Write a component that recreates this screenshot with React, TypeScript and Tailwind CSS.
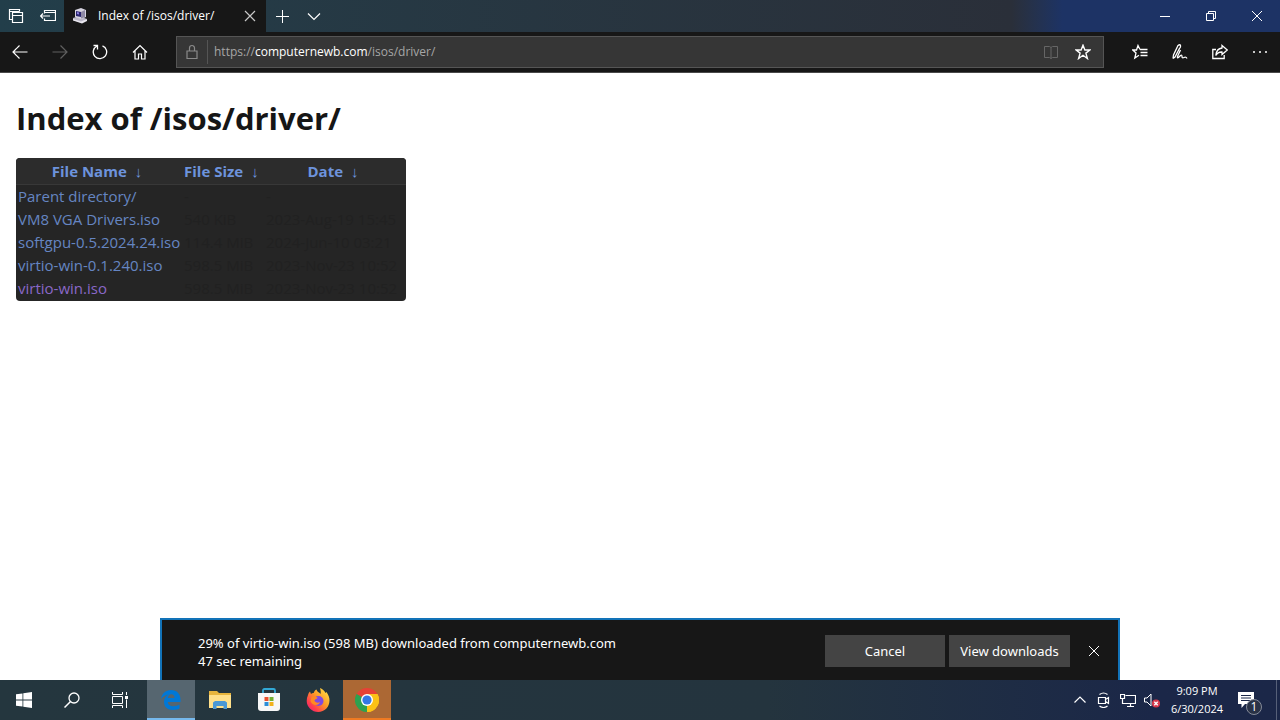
import { useState, type ReactNode } from "react";

type IconProps = { children: ReactNode; className?: string };

function Icon({ children, className = "size-4" }: IconProps) {
  return (
    <svg viewBox="0 0 16 16" fill="none" stroke="currentColor" strokeWidth="1" className={className} aria-hidden="true">
      {children}
    </svg>
  );
}

function IconButton({ label, className, children, disabled }: { label: string; className: string; children: ReactNode; disabled?: boolean }) {
  return (
    <button type="button" aria-label={label} disabled={disabled} className={`flex shrink-0 items-center justify-center ${className}`}>
      {children}
    </button>
  );
}

const files = [
  { name: "Parent directory/", size: "-", date: "-", visited: false },
  { name: "VM8 VGA Drivers.iso", size: "540 KiB", date: "2023-Aug-19 15:45", visited: false },
  { name: "softgpu-0.5.2024.24.iso", size: "114.4 MiB", date: "2024-Jun-10 03:21", visited: false },
  { name: "virtio-win-0.1.240.iso", size: "598.5 MiB", date: "2023-Nov-23 10:52", visited: false },
  { name: "virtio-win.iso", size: "598.5 MiB", date: "2023-Nov-23 10:52", visited: true },
];

const starPath = "M8 1.200 9.900 6h5l-4 3.100 1.500 5.400L8 11.300l-4.400 3.200 1.500-5.400-4-3.100h5z";

function TabBar() {
  return (
    <header className="flex h-8 bg-linear-to-r from-[#223e4a] via-[#2a2f39] via-79% to-[#1d3365] to-83% text-white">
      <IconButton label="Tabs you've set aside" className="w-8">
        <Icon>
          <path d="M4 11.500H1.500v-10h10v2M1.500 3.500h10M4.500 4.500h10v10h-10zM4.500 7.500h10" strokeWidth="1.200" />
        </Icon>
      </IconButton>
      <IconButton label="Set these tabs aside" className="w-8">
        <Icon>
          <path d="M4.500 5.500v-3h11v10h-11v-2M4.500 4.500h11M.5 8h9.500M3 5.500.5 8 3 10.500" strokeWidth="1.200" />
        </Icon>
      </IconButton>
      <div className="flex w-[202px] items-center bg-[#171717] pr-1 pl-2">
        <svg viewBox="0 0 16 16" className="size-4 shrink-0" aria-hidden="true">
          <path d="m1 10 6-2 8 3-5 4-9-3z" fill="#b9b6c6" />
          <path d="m1 11 8 2.500 6-2.500v2l-5 2.500-9-3z" fill="#e9e7ef" />
          <path d="m3 2 6-2 5 2v7l-5 2-6-2z" fill="#d6d3df" />
          <path d="m4 3 5 1v5L4 8z" fill="#2a2570" />
          <path d="m9 4 4-2v7l-4 1.500z" fill="#8e89a5" />
          <path d="m5 4 2 .5v2L5 6z" fill="#8c80e0" />
        </svg>
        <span className="ml-2.5 flex-1 truncate text-xs font-medium">Index of /isos/driver/</span>
        <IconButton label="Close tab" className="size-6 text-[#c8c8c8]">
          <Icon>
            <path d="m3 3 10 10M13 3 3 13" strokeWidth="1.200" />
          </Icon>
        </IconButton>
      </div>
      <IconButton label="New tab" className="w-8">
        <Icon>
          <path d="M8.500 2v13M2 8.500h13" />
        </Icon>
      </IconButton>
      <IconButton label="Show tab previews" className="w-8">
        <Icon>
          <path d="m2 5.500 6 6 6-6" strokeWidth="1.200" />
        </Icon>
      </IconButton>
      <div className="flex-1" />
      <IconButton label="Minimize" className="w-[46px]">
        <Icon>
          <path d="M3 8.500h10" />
        </Icon>
      </IconButton>
      <IconButton label="Restore" className="w-[46px]">
        <Icon>
          <path d="M3.500 5.500h7v7h-7zM5.500 5V3.500h7v7H11" />
        </Icon>
      </IconButton>
      <IconButton label="Close window" className="w-[46px]">
        <Icon>
          <path d="m3 3 10 10M13 3 3 13" />
        </Icon>
      </IconButton>
    </header>
  );
}

function Toolbar() {
  return (
    <nav aria-label="Browser" className="flex h-[41px] items-center border-b border-[#4a4a4a] bg-[#171717] text-white">
      <IconButton label="Back" className="h-8 w-10">
        <Icon>
          <path d="M1 8h14.500M7.500 1.500 1 8l6.500 6.500" strokeWidth="1.200" />
        </Icon>
      </IconButton>
      <IconButton label="Forward" className="h-8 w-10 text-[#606060]" disabled>
        <Icon>
          <path d="M.5 8H15M8.500 1.500 15 8l-6.500 6.500" strokeWidth="1.200" />
        </Icon>
      </IconButton>
      <IconButton label="Refresh" className="h-8 w-10">
        <Icon>
          <path d="M5 2a6.700 6.700 0 1 0 5.500-.2M1.500 1.500h4v4" strokeWidth="1.300" />
        </Icon>
      </IconButton>
      <IconButton label="Home" className="h-8 w-10">
        <Icon>
          <path d="M1 8.500 8 1.500l7 7M3 7v8h3.500v-5h3v5H13V7" strokeWidth="1.200" />
        </Icon>
      </IconButton>
      <div className="ml-4 flex h-8 min-w-0 flex-1 items-center border border-[#555] bg-[#363636]">
        <IconButton label="Website identity" className="h-6 w-[31px] border-r border-[#555] text-[#8a8a8a]">
          <Icon>
            <path d="M3 7h10v7.500H3zM5.500 7V4a2.500 2.500 0 0 1 5 0v3" strokeWidth="1.200" />
          </Icon>
        </IconButton>
        <div className="relative h-full min-w-0 flex-1 text-xs leading-[30px]">
          <input
            aria-label="Address"
            defaultValue="https://computernewb.com/isos/driver/"
            className="peer h-full w-full bg-transparent px-1.5 text-transparent outline-none focus:text-white"
          />
          <span aria-hidden="true" className="pointer-events-none absolute inset-0 truncate px-1.5 text-[#a6a6a6] peer-focus:hidden">
            https://<span className="text-white">computernewb.com</span>/isos/driver/
          </span>
        </div>
        <IconButton label="Reading view" className="h-full w-8 text-[#666]" disabled>
          <Icon>
            <path d="M1.500 2.500h5L8 3.500l1.500-1h5v11h-5L8 14.500l-1.500-1h-5zM8 3.500v11" />
          </Icon>
        </IconButton>
        <IconButton label="Add to favorites" className="mr-1 h-full w-8">
          <Icon>
            <path d={starPath} strokeWidth="1.400" />
          </Icon>
        </IconButton>
      </div>
      <div className="ml-4 flex">
        <IconButton label="Favorites hub" className="h-8 w-10">
          <Icon>
            <path d="M8 5.500 6 1.500 4.500 6H.8l3.200 3-1.200 5L7 11.200M8 5.500h7.500M8.500 8.500h7M8.500 11.500h7" strokeWidth="1.300" />
          </Icon>
        </IconButton>
        <IconButton label="Add notes" className="h-8 w-10">
          <Icon>
            <path d="M1 14.500 1.500 11 6 1.500q2-1.500 2.500 0t-1 3L3 13l-2 1.500M8.500 6 5.500 12.500q-.5 2 1 1l2-2q1.500-1 1.500 1t2 1 3 1" strokeWidth="1.300" />
          </Icon>
        </IconButton>
        <IconButton label="Share" className="h-8 w-10">
          <Icon>
            <path d="M4 5.500H.8v9h11.400V11M10 1.500l5.300 4.500L10 10.500V8C7 7.800 5.200 9 3.800 11.500 4.200 7 6.500 4.400 10 4z" strokeWidth="1.300" />
          </Icon>
        </IconButton>
        <IconButton label="Settings and more" className="h-8 w-10">
          <Icon>
            <g fill="currentColor" stroke="none">
              <circle cx="2" cy="8" r="1" />
              <circle cx="8" cy="8" r="1" />
              <circle cx="14" cy="8" r="1" />
            </g>
          </Icon>
        </IconButton>
      </div>
    </nav>
  );
}

function HeadCell({ label }: { label: string }) {
  return (
    <th className="h-[26px] border-b border-[#383838] px-0.5 pt-0.5 pb-0 text-center font-bold">
      <a href="#sort">{label}</a>
      <a href="#sort-descending" aria-label={`Sort by ${label}, descending`} className="mr-1 ml-2 font-normal">
        ↓
      </a>
    </th>
  );
}

function Listing() {
  return (
    <main className="flex-1 px-4 pt-5">
      <h1 className="text-[31px] leading-[50px] font-bold text-[#161616]">Index of /isos/driver/</h1>
      <div className="mt-[15px] w-fit overflow-hidden rounded bg-[#252525] pb-px">
        <table className="w-[390px] table-fixed border-collapse text-[15px] leading-[23px] whitespace-nowrap text-[#6d93dc]">
          <colgroup>
            <col className="w-[166px]" />
            <col className="w-[82px]" />
            <col />
          </colgroup>
          <thead className="bg-[#2c2c2c]">
            <tr>
              <HeadCell label="File Name" />
              <HeadCell label="File Size" />
              <HeadCell label="Date" />
            </tr>
          </thead>
          <tbody>
            {files.map((file) => (
              <tr key={file.name} className="text-[#212121]">
                <td className="px-0.5 py-0">
                  <a href="#file" className={file.visited ? "text-[#8a68c8]" : "text-[#6585c2]"}>
                    {file.name}
                  </a>
                </td>
                <td className="px-0.5 py-0">{file.size}</td>
                <td className="px-0.5 py-0">{file.date}</td>
              </tr>
            ))}
          </tbody>
        </table>
      </div>
    </main>
  );
}

function DownloadBar({ onClose }: { onClose: () => void }) {
  return (
    <section
      aria-label="Download"
      className="mx-40 flex h-[62px] items-center border-2 border-b-0 border-[#1273b8] bg-[#171717] pr-1 pl-9 font-['Noto_Sans','Open_Sans',sans-serif] text-[13px] leading-[18px] text-white"
    >
      <p className="mt-1 min-w-0 flex-1">
        29% of virtio-win.iso (598 MB) downloaded from computernewb.com
        <br />
        47 sec remaining
      </p>
      <div className="mt-0.5 flex items-center gap-1">
        <button type="button" className="h-8 w-[120px] bg-[#444]">Cancel</button>
        <button type="button" className="h-8 w-[121px] bg-[#444] whitespace-nowrap">View downloads</button>
        <button type="button" aria-label="Dismiss" onClick={onClose} className="flex h-8 w-10 items-center justify-center">
          <Icon>
            <path d="m3 3 10 10M13 3 3 13" />
          </Icon>
        </button>
      </div>
    </section>
  );
}

function Taskbar() {
  return (
    <footer className="flex h-10 items-stretch bg-linear-to-r from-[#24363e] via-[#24343e] via-60% to-[#1b2748] to-90% text-white">
      <IconButton label="Start" className="w-12">
        <svg viewBox="0 0 16 16" className="size-4" fill="#fff" aria-hidden="true">
          <path d="m0 2.300 6.500-.9v6.200H0zM7.300 1.300 16 0v7.600H7.300zM0 8.400h6.500v6.200L0 13.700zM7.300 8.400H16V16l-8.700-1.300z" />
        </svg>
      </IconButton>
      <IconButton label="Search" className="w-12">
        <Icon>
          <circle cx="10" cy="6" r="5" strokeWidth="1.300" />
          <path d="M6.500 9.500.5 15.500" strokeWidth="1.500" />
        </Icon>
      </IconButton>
      <IconButton label="Task view" className="mr-[3px] w-12">
        <Icon>
          <path d="M.5 0v2.500h10V0M.5 16v-2.500h10V16M.5 4.500h10v7H.5zM14.500 0v3M14.500 7.500V16" />
          <path d="M13 4h3v3h-3z" fill="currentColor" stroke="none" />
        </Icon>
      </IconButton>
      <IconButton label="Microsoft Edge" className="w-12 border-b-2 border-[#76b9ed] bg-[#566670]">
        <svg viewBox="0 0 20 20" className="mt-0.5 size-5" aria-hidden="true">
          <path
            fill="#0078d7"
            d="M0 9C.8 3.500 4.700 0 10 0c6 0 9.500 4.200 9.500 9.500V12H6.800c.2 3 2.700 4.300 5.700 4.300 2.300 0 4.200-.6 6-1.700v4C16.700 19.600 14.300 20 12 20c-5.500 0-9-3-9-8.200 0-3.300 1.800-6 4.600-7.400C4.500 4.800 1.800 6.400 0 9zm6.900-1H13.500c0-2.400-1.100-3.700-3.200-3.700-2 0-3.100 1.500-3.400 3.700z"
          />
        </svg>
      </IconButton>
      <IconButton label="File Explorer" className="w-[49px]">
        <svg viewBox="0 0 24 20" className="h-5 w-6" aria-hidden="true">
          <path d="M1 1h8l2 2h12v15H1z" fill="#e7b53d" />
          <path d="M1 5h22v13H1z" fill="#ffe08a" />
          <path d="M5 19v-6.500L7 11h10l2 1.500V19h-3.500v-3h-7v3z" fill="#4a98d4" />
        </svg>
      </IconButton>
      <IconButton label="Microsoft Store" className="w-[49px]">
        <svg viewBox="0 0 24 24" className="size-6" aria-hidden="true">
          <path d="M6 6V2.500Q6 1 7.500 1h9Q18 1 18 2.500V6" fill="none" stroke="#32a9d6" strokeWidth="1.800" />
          <path d="M1 5h22v15q0 3-3 3H4q-3 0-3-3z" fill="#f7f7f7" />
          <path d="M7.500 9h4v4h-4z" fill="#e8502e" />
          <path d="M12.500 9h4v4h-4z" fill="#73af31" />
          <path d="M7.500 14h4v4h-4z" fill="#2a8dd8" />
          <path d="M12.500 14h4v4h-4z" fill="#f2b21c" />
        </svg>
      </IconButton>
      <IconButton label="Firefox" className="w-[50px]">
        <svg viewBox="0 0 24 24" className="size-6" aria-hidden="true">
          <defs>
            <linearGradient id="fox" x1="1" y1="0" x2="0" y2="1">
              <stop offset="0" stopColor="#fff14d" />
              <stop offset="0.450" stopColor="#ff9825" />
              <stop offset="0.750" stopColor="#ff3d4e" />
              <stop offset="1" stopColor="#e31587" />
            </linearGradient>
          </defs>
          <path d="M2 7c.4-1.500 1-2.500 2-3.500L5 6c1-.8 1.600-1 2.700-1C8 3.500 9 2 10.500 1.500 11 4 13 4 14.500 6 15 4 14.500 2 14 0c3 1 4.500 3 5.500 5l1-1c2 3 3 5.500 3 8.500C23.500 19 18.500 24 12.200 24S.7 19 .7 13c0-2 .4-4 1.300-6z" fill="url(#fox)" />
          <circle cx="12.500" cy="13" r="5" fill="#804adf" />
          <path d="M5.500 9c2-1 4 .2 6 .5 0 1.500-2.500 1.500-3 3 .5 2 3.500 3 5.500 1.500-1 4-8 4-9.500-1z" fill="#ff8a22" />
        </svg>
      </IconButton>
      <IconButton label="Google Chrome" className="w-12 border-b-2 border-[#ef7a22] bg-[#ac6834]">
        <svg viewBox="0 0 24 24" className="mt-0.5 size-6" aria-hidden="true">
          <path d="M12 12 1.600 6A12 12 0 0 1 22.400 6z" fill="#e64235" />
          <path d="M12 12 22.400 6A12 12 0 0 1 12 24z" fill="#fbc116" />
          <path d="M12 12v12A12 12 0 0 1 1.600 6z" fill="#2da14f" />
          <path d="M12 6h10.400A12 12 0 0 1 12 24l5.200-9z" fill="#fbc116" />
          <circle cx="12" cy="12" r="6" fill="#fff" />
          <circle cx="12" cy="12" r="4.600" fill="#3478e5" />
        </svg>
      </IconButton>
      <div className="flex-1" />
      <IconButton label="Show hidden icons" className="w-6">
        <Icon>
          <path d="m2.500 10.500 5.500-5.500 5.500 5.500" strokeWidth="1.200" />
        </Icon>
      </IconButton>
      <IconButton label="Meet Now" className="w-6">
        <Icon>
          <path d="M2.500 5.500h7v6h-7zM9.500 7.500l3-2v6l-3-2M3.500 2.500q4-3 8 0M3.500 14q4 3 8 0" strokeWidth="1.200" />
        </Icon>
      </IconButton>
      <IconButton label="Network" className="w-6">
        <Icon>
          <path d="M5.500 3.500h10v8h-10M10.500 11.500v3M7 14.500h7M.5 2.500h4v4h-4zM2.500 6.500v5h3" strokeWidth="1.200" />
        </Icon>
      </IconButton>
      <IconButton label="Volume: muted" className="w-6">
        <Icon>
          <path d="M.5 6H3l4-4v12l-4-4H.5z" />
          <circle cx="12" cy="11.500" r="4" fill="#d9394c" stroke="none" />
          <path d="m10.300 9.800 3.400 3.400m0-3.400-3.400 3.400" strokeWidth="1.300" />
        </Icon>
      </IconButton>
      <button type="button" className="w-[66px] text-center text-[11px] leading-[18px] whitespace-nowrap">
        9:09 PM
        <br />
        6/30/2024
      </button>
      <IconButton label="1 new notification" className="relative mr-0.5 w-11">
        <svg viewBox="0 0 16 16" className="mr-3 size-4" aria-hidden="true">
          <path d="M0 0h16v12H7l-3.500 4v-4H0z" fill="#fff" />
          <path d="M3 3.500h10M3 6h10M3 8.500h10" stroke="#1b2748" />
        </svg>
        <span className="absolute top-[19px] left-4 flex size-4 items-center justify-center rounded-full border border-[#858b99] bg-[#293246] text-xs">
          1
        </span>
      </IconButton>
      <button type="button" aria-label="Show desktop" className="w-1 border-l border-[#566078]" />
    </footer>
  );
}

export default function App() {
  const [downloadOpen, setDownloadOpen] = useState(true);
  return (
    <div className="flex min-h-screen flex-col bg-white font-['Open_Sans','Noto_Sans',sans-serif]">
      <TabBar />
      <Toolbar />
      <Listing />
      {downloadOpen && <DownloadBar onClose={() => setDownloadOpen(false)} />}
      <Taskbar />
    </div>
  );
}
